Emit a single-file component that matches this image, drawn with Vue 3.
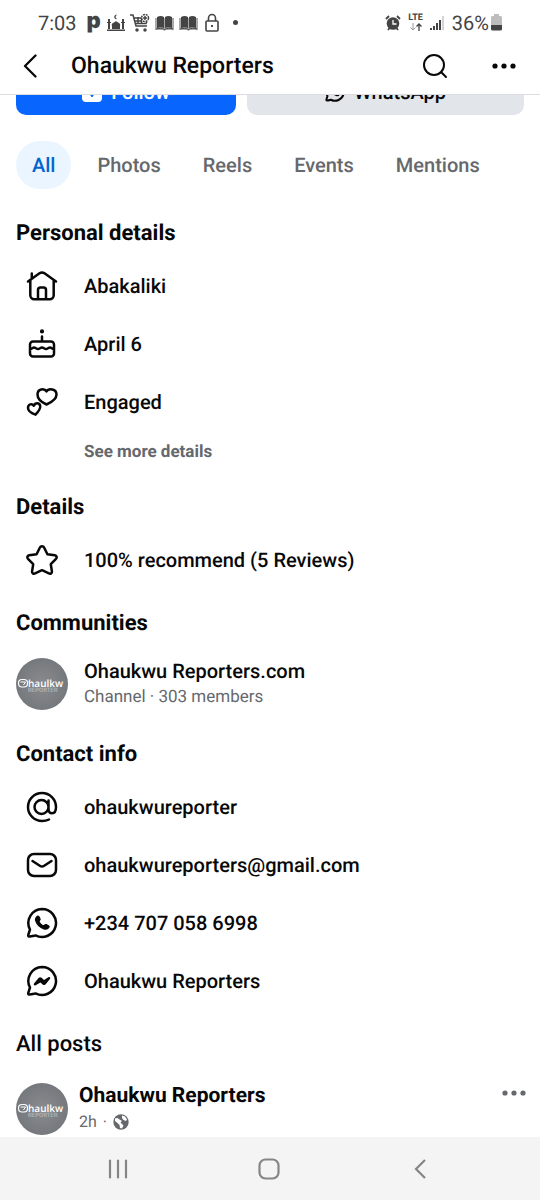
<template>
  <div class="screen">
    <div class="status-bar">
      <div class="status-left">
        <span class="clock">7:03</span>
        <span class="p-logo">p</span>
        <svg class="mosque" width="18" height="18" viewBox="0 0 18 18" fill="currentColor">
          <path d="M1 5h2v10H1zM15 5h2v10h-2zM0 8h4v1H0zM14 8h4v1h-4zM5 15v-3c-1.500-3 3-3.500 4-5 1 1.500 5.500 2 4 5v3zM0 15.500h18V17H0z" />
          <path d="M10.500 1a2.200 2.200 0 1 0 0 3.800 1.900 1.900 0 1 1 0-3.800z" />
        </svg>
        <svg width="20" height="20" viewBox="0 0 20 20" fill="none" stroke="currentColor" stroke-width="1.500">
          <path d="M0 2h3l3 11h11M4 5h7M5 8h7M5 10.500h11l1-2M8 4v7M11.500 5v6" />
          <circle cx="15" cy="5" r="3.500" stroke-dasharray="2 .8" />
          <path d="M15 3v4M13 5h4" />
          <circle cx="7" cy="17" r="1" fill="currentColor" />
          <circle cx="15" cy="17" r="1" fill="currentColor" />
        </svg>
        <svg v-for="n in 2" :key="n" class="book" width="19" height="16" viewBox="0 0 19 16">
          <path d="M0 3h19v12h-8l-1.500 1L8 15H0z" fill="#aaa" />
          <path d="M2 2c3-1.500 5-1 7 0v11c-2-1-4-1-7 0zM10 2c2-1 4-1.500 7 0v11c-3-1-5-1-7 0z" fill="currentColor" />
          <path d="M1 14c3-1 6-1 8.500.500C12 13 15 13 18 14" fill="none" stroke="currentColor" stroke-width="1" />
        </svg>
        <svg class="lock" width="14" height="20" viewBox="0 0 14 20" fill="none" stroke="currentColor" stroke-width="1.600">
          <rect x="1" y="8" width="12" height="10" rx="1" />
          <path d="M3.500 8V5a3.500 3.500 0 0 1 7 0v3" />
          <circle cx="7" cy="13" r="1" fill="currentColor" stroke="none" />
          <path d="M7 12v2" />
        </svg>
        <span class="status-dot"></span>
      </div>
      <div class="status-right">
        <svg width="16" height="16" viewBox="0 0 16 16">
          <circle cx="8" cy="8.500" r="6.300" fill="currentColor" />
          <path d="M1 4l3-3M15 4l-3-3M3 15l1.500-2M13 15l-1.500-2" stroke="currentColor" stroke-width="1.800" />
          <path d="M8 5v4h3.500" fill="none" stroke="#fff" stroke-width="1.300" />
        </svg>
        <div class="network">
          <span>LTE</span>
          <svg width="12" height="8" viewBox="0 0 12 8" fill="none">
            <path d="M3 0v7M.5 4.500L3 7l2.500-2.500" stroke="#999" />
            <path d="M9 8V1M6.500 3.500L9 1l2.500 2.500" stroke="currentColor" stroke-width="1.300" />
          </svg>
        </div>
        <svg width="15" height="16" viewBox="0 0 15 16" fill="currentColor">
          <path d="M0 13h2v2H0zM3 11h2v4H3zM6 8h2v7H6zM9 5h2v10H9z" />
          <path d="M12.500 1h1v14h-1z" fill="#aaa" />
        </svg>
        <span class="battery-text">36%</span>
        <svg class="battery" width="11" height="17" viewBox="0 0 11 17">
          <path d="M3 0h5v2h1.500A1.500 1.500 0 0 1 11 3.500V11H0V3.500A1.500 1.500 0 0 1 1.500 2H3z" fill="#bdbdbd" />
          <path d="M0 11h11v4a1.500 1.500 0 0 1-1.500 1.500h-8A1.500 1.500 0 0 1 0 15z" fill="currentColor" />
        </svg>
      </div>
    </div>

    <header class="header">
      <button class="icon-btn" aria-label="Back">
        <svg width="14" height="24" viewBox="0 0 14 24" fill="none" stroke="currentColor" stroke-width="2.300" stroke-linecap="round" stroke-linejoin="round">
          <path d="M12.500 1.500L2 12l10.500 10.500" />
        </svg>
      </button>
      <h1>Ohaukwu Reporters</h1>
      <button class="icon-btn" aria-label="Search">
        <svg width="26" height="26" viewBox="0 0 26 26" fill="none" stroke="currentColor" stroke-width="2" stroke-linecap="round">
          <circle cx="12" cy="12" r="10" />
          <path d="M19.300 19.300L24 24" />
        </svg>
      </button>
      <button class="icon-btn more" aria-label="More options">
        <svg width="24" height="6" viewBox="0 0 24 6" fill="currentColor">
          <circle cx="3" cy="3" r="2.600" />
          <circle cx="12" cy="3" r="2.600" />
          <circle cx="21" cy="3" r="2.600" />
        </svg>
      </button>
    </header>

    <main class="content">
      <div class="actions">
        <button class="action follow">
          <svg width="20" height="20" viewBox="0 0 20 20">
            <rect width="20" height="20" rx="4" fill="#fff" />
            <path d="M10 5v8M8 12h4l-2 3z" fill="#0866ff" stroke="#0866ff" stroke-linejoin="round" />
          </svg>
          Follow
        </button>
        <button class="action whatsapp">
          <svg width="20" height="20" viewBox="0 0 32 32">
            <path :d="bubble" fill="none" stroke="currentColor" stroke-width="3.200" stroke-linejoin="round" />
            <path :d="phone" fill="currentColor" />
          </svg>
          WhatsApp
        </button>
      </div>

      <nav class="tabs">
        <button
          v-for="tab in tabs"
          :key="tab"
          :class="['tab', { active: tab === currentTab }]"
          @click="currentTab = tab"
        >
          {{ tab }}
        </button>
      </nav>

      <section v-for="section in sections" :key="section.title" class="section">
        <h2>{{ section.title }}</h2>

        <component
          :is="item.href ? 'a' : 'div'"
          v-for="item in section.items"
          :key="item.text"
          :href="item.href"
          class="row"
        >
          <span class="row-icon">
            <svg width="32" height="32" viewBox="0 0 32 32" fill="none" stroke="currentColor" stroke-width="2.500" stroke-linecap="round" stroke-linejoin="round">
              <path :d="icons[item.icon].line" />
              <path v-if="icons[item.icon].solid" :d="icons[item.icon].solid" fill="currentColor" stroke="none" />
            </svg>
          </span>
          <span>{{ item.text }}</span>
        </component>

        <button v-if="section.more" class="see-more">{{ section.more }}</button>

        <a v-if="section.community" href="#" class="community">
          <svg class="avatar" viewBox="0 0 52 52"><use href="#page-avatar" /></svg>
          <span class="community-text">
            <span class="name">{{ section.community.name }}</span>
            <span class="meta">{{ section.community.meta }}</span>
          </span>
        </a>
      </section>

      <section class="section">
        <h2 class="posts-title">All posts</h2>
        <article class="post">
          <svg class="avatar" viewBox="0 0 52 52">
            <defs>
              <radialGradient id="avatar-bg">
                <stop offset="0" stop-color="#898b8f" />
                <stop offset="1" stop-color="#75787c" />
              </radialGradient>
              <g id="page-avatar">
                <circle cx="26" cy="26" r="26" fill="url(#avatar-bg)" />
                <rect x="2.500" y="21.500" width="9" height="7.500" rx="3.500" fill="none" stroke="#fff" stroke-width="1.200" />
                <path d="M4.500 24h5l-2 3" fill="none" stroke="#fff" />
                <text x="12" y="29" class="logo-text">haulkw</text>
                <text x="12" y="34" class="logo-sub">REPORTER</text>
              </g>
            </defs>
            <use href="#page-avatar" />
          </svg>
          <div class="post-text">
            <h3>Ohaukwu Reporters</h3>
            <p class="post-meta">
              <span>2h</span>
              <span>·</span>
              <svg width="16" height="16" viewBox="0 0 16 16">
                <circle cx="8" cy="8" r="7.700" fill="#65686c" />
                <path d="M2 4.500l2.500-.5 2 1.500 2.500 1.500-1.500 1.500 1.500 1.500 1.500 1.500-1.500 3-2-.5-.5-3-2-2-2.500-2zM9 1.500l3 1 2 3-1 1.500-2.500-1-1.500-2z" fill="#fff" />
              </svg>
            </p>
          </div>
          <button class="icon-btn post-more" aria-label="Post options">
            <svg width="24" height="6" viewBox="0 0 24 6" fill="currentColor">
              <circle cx="3" cy="3" r="2.600" />
              <circle cx="12" cy="3" r="2.600" />
              <circle cx="21" cy="3" r="2.600" />
            </svg>
          </button>
        </article>
      </section>
    </main>

    <nav class="system-nav">
      <button aria-label="Recent apps">
        <svg width="20" height="20" viewBox="0 0 20 20" stroke="currentColor" stroke-width="2.200" stroke-linecap="round">
          <path d="M2 1.500v17M10 1.500v17M18 1.500v17" />
        </svg>
      </button>
      <button aria-label="Home">
        <svg width="22" height="22" viewBox="0 0 22 22" fill="none" stroke="currentColor" stroke-width="2.200">
          <rect x="1.500" y="1.500" width="19" height="19" rx="6" />
        </svg>
      </button>
      <button aria-label="Back">
        <svg width="12" height="20" viewBox="0 0 12 20" fill="none" stroke="currentColor" stroke-width="2.200">
          <path d="M11 1l-9 9 9 9" />
        </svg>
      </button>
    </nav>
  </div>
</template>

<script setup>
import { ref } from "vue";

const tabs = ["All", "Photos", "Reels", "Events", "Mentions"];
const currentTab = ref("All");

// Chat bubble shared by the WhatsApp and Messenger icons
const bubble =
  "M16 2a14 14 0 1 1-6.500 26.400C7 29 4 30 2.600 29.400c-.8-.4-.3-1.600 0-2.600L4 22.500A14 14 0 0 1 16 2z";
const phone =
  "M10.500 9.200c1-1 2.300-.7 3 .4l1 1.900c.5 1 .1 1.600-.6 2.400-.3.400-.2.800.1 1.300.7 1.100 1.600 2 2.800 2.700.5.300.9.300 1.300-.1.800-.9 1.500-1.100 2.400-.7l2.200 1.100c1.100.6 1.300 1.500.6 2.600-1.200 1.900-3.300 2.300-5.500 1.600-4.400-1.400-7.600-4.500-8.800-8.800-.4-1.600.2-3.200 1.500-4.400z";

const icons = {
  home: {
    line: "M2 11.500L13.500 3.300a4.500 4.500 0 0 1 5 0L30 11.500M4.300 10.500v14.800a4 4 0 0 0 4 4h15.400a4 4 0 0 0 4-4V10.500M5.800 8V3.500M12 29v-9a2.500 2.500 0 0 1 2.500-2.500h3A2.500 2.500 0 0 1 20 20v9",
  },
  cake: {
    line: "M16 8.500V13M7 13.500h18a3 3 0 0 1 3 3v9a3 3 0 0 1-3 3H7a3 3 0 0 1-3-3v-9a3 3 0 0 1 3-3zM4 21c2 0 2.500-1.500 4-1.500s2.500 1.500 4 1.500 2.500-1.500 4-1.500 2.500 1.500 4 1.500 2.500-1.500 4-1.500 2 1.500 4 1.500",
    solid: "M16 1.300a2.100 2.100 0 1 1 0 4.200 2.100 2.100 0 0 1 0-4.200z",
  },
  hearts: {
    line: "M20.500 5.500C18.500 2 11.500 2.500 11.500 8.500c0 4.500 4.500 8 9 10 4.500-2 10-5.500 10-10 0-6-8-6.500-10-3zM7.800 19.800C6 17 2 18 2 22c0 3.500 3.500 5.200 7.500 6.700 2.500-2.700 5.200-5.700 4.700-8.700-.7-3.500-5-3.500-6.400-.2z",
  },
  star: {
    line: "M13.900 3.500a2.300 2.300 0 0 1 4.200 0l3.300 6.700 7.400 1.100c1.900.3 2.400 2.100 1.200 3.500l-5.200 5.400 1.100 7c.3 2-1.400 3-3 2.200L16 26.200l-6.900 3.200c-1.600.8-3.300-.2-3-2.200l1.100-7L2 14.800c-1.200-1.400-.7-3.200 1.200-3.500l7.400-1.100z",
  },
  at: {
    line: "M22.500 9.500v8.300c0 3 1.300 4.500 3.500 4.500 2.700 0 4-2.700 4-6.300a14 14 0 1 0-14 14c2.500 0 5-.5 7-1.500M22.500 16a7 7 0 1 1-14 0 7 7 0 0 1 14 0z",
  },
  mail: {
    line: "M8 5h16a6 6 0 0 1 6 6v10a6 6 0 0 1-6 6H8a6 6 0 0 1-6-6V11a6 6 0 0 1 6-6zM6.500 12l7.700 5a3.300 3.300 0 0 0 3.600 0l7.700-5",
  },
  whatsapp: { line: bubble, solid: phone },
  messenger: {
    line: bubble,
    solid:
      "M8 18.500l4.600-5.500c.8-1 2.100-1 3-.2l2.400 2.100 4.400-2.700c1.400-.8 2.400.4 1.500 1.700l-4 5.200c-.8 1.100-2.200 1.200-3.200.3l-2.300-1.900-4.700 2.800c-1.400.8-2.500-.7-1.700-1.800z",
  },
};

const sections = [
  {
    title: "Personal details",
    items: [
      { icon: "home", text: "Abakaliki" },
      { icon: "cake", text: "April 6" },
      { icon: "hearts", text: "Engaged" },
    ],
    more: "See more details",
  },
  {
    title: "Details",
    items: [{ icon: "star", text: "100% recommend (5 Reviews)" }],
  },
  {
    title: "Communities",
    items: [],
    community: { name: "Ohaukwu Reporters.com", meta: "Channel · 303 members" },
  },
  {
    title: "Contact info",
    items: [
      { icon: "at", text: "ohaukwureporter", href: "#" },
      { icon: "mail", text: "ohaukwureporters@gmail.com", href: "mailto:ohaukwureporters@gmail.com" },
      { icon: "whatsapp", text: "+234 707 058 6998", href: "tel:+2347070586998" },
      { icon: "messenger", text: "Ohaukwu Reporters", href: "#" },
    ],
  },
];
</script>

<style>
body {
  margin: 0;
  background: #fff;
}
</style>

<style scoped>
.screen {
  min-height: 100vh;
  display: flex;
  flex-direction: column;
  background: #fff;
  color: #080809;
  font-family: Roboto, "Liberation Sans", sans-serif;
  font-size: 20px;
  text-rendering: geometricPrecision;
}

svg {
  display: block;
  flex: none;
}

button {
  font: inherit;
  color: inherit;
  text-rendering: inherit;
  background: none;
  border: none;
  padding: 0;
  cursor: pointer;
}

a {
  color: inherit;
  text-decoration: none;
}

h1,
h2,
h3,
p {
  margin: 0;
}

/* Status bar */
.status-bar {
  display: flex;
  align-items: center;
  justify-content: space-between;
  height: 45px;
  padding: 0 38px;
  color: #444;
}

.status-left,
.status-right {
  display: flex;
  align-items: center;
}

.status-left {
  gap: 5px;
}

.status-right {
  gap: 7px;
}

.clock,
.battery-text {
  font-size: 20px;
  line-height: 24px;
}

.p-logo {
  width: 16px;
  margin-left: 4px;
  padding-bottom: 4px;
  font-family: Inter, sans-serif;
  font-size: 22px;
  line-height: 20px;
  font-weight: 900;
  text-align: center;
}

.lock {
  margin-left: 2px;
}

.status-dot {
  width: 5px;
  height: 5px;
  margin-left: 9px;
  border-radius: 50%;
  background: currentColor;
}

.network {
  display: flex;
  flex-direction: column;
  align-items: center;
  font-size: 9px;
  line-height: 9px;
  font-weight: 700;
}

.battery {
  margin-left: -5px;
}

/* Header */
.header {
  display: flex;
  align-items: center;
  height: 42px;
  padding: 0 24px 7px 23px;
  border-bottom: 1px solid #dcdde0;
}

.header h1 {
  flex: 1;
  margin-left: 34px;
  font-size: 23px;
  line-height: 28px;
  font-weight: 500;
}

.icon-btn {
  display: flex;
  align-items: center;
  justify-content: center;
}

.more {
  margin-left: 44px;
}

.content {
  flex: 1;
}

/* Follow and WhatsApp are scrolled partly under the header */
.actions {
  display: flex;
  align-items: flex-end;
  gap: 11px;
  height: 20px;
  padding: 0 16px;
  overflow: hidden;
}

.action {
  display: flex;
  align-items: center;
  justify-content: center;
  gap: 9px;
  height: 47px;
  border-radius: 10px;
  font-weight: 500;
}

.follow {
  flex: 220 1 0;
  background: #0866ff;
  color: #fff;
}

.whatsapp {
  flex: 277 1 0;
  background: #e2e5e9;
}

/* Tabs */
.tabs {
  display: flex;
  gap: 10px;
  padding: 26px 16px 10px;
}

.tab {
  height: 48px;
  padding: 0 16px;
  border-radius: 24px;
  color: #65686c;
  font-weight: 500;
}

.tab.active {
  background: #ebf5ff;
  color: #0064d1;
}

/* Sections */
.section {
  padding-top: 12px;
}

.section h2 {
  padding: 0 16px;
  font-size: 22px;
  line-height: 46px;
  font-weight: 700;
}

.section .posts-title {
  font-weight: 500;
}

.row {
  display: flex;
  align-items: center;
  gap: 16px;
  height: 58px;
  padding: 0 16px;
  font-weight: 500;
}

.row-icon {
  display: flex;
  justify-content: center;
  width: 52px;
}

.see-more {
  display: block;
  height: 42px;
  margin-left: 84px;
  color: #65686c;
  font-size: 17px;
  font-weight: 700;
}

.community {
  display: flex;
  align-items: center;
  gap: 16px;
  padding: 11px 16px 10px;
}

.avatar {
  width: 52px;
  height: 52px;
}

.logo-text {
  fill: #fff;
  font-family: "Open Sans", sans-serif;
  font-size: 10px;
  font-weight: 600;
}

.logo-sub {
  fill: #b4b6ba;
  font-size: 6px;
  font-weight: 500;
}

.community-text {
  display: flex;
  flex-direction: column;
  line-height: 26px;
}

.name {
  font-weight: 500;
}

.meta {
  color: #65686c;
  font-size: 17px;
}

/* Posts */
.post {
  display: flex;
  align-items: flex-start;
  gap: 11px;
  padding: 15px 14px 2px 16px;
}

.post-text {
  flex: 1;
}

.post h3 {
  font-size: 21px;
  line-height: 26px;
  font-weight: 700;
}

.post-meta {
  display: flex;
  align-items: center;
  gap: 6px;
  color: #65686c;
  font-size: 16px;
  line-height: 26px;
}

.post-more {
  height: 20px;
  color: #65686c;
}

/* Android navigation */
.system-nav {
  display: flex;
  height: 63px;
  padding: 0 44px 0 42px;
  background: #f4f4f4;
  color: #858585;
}

.system-nav button {
  flex: 1;
  display: flex;
  align-items: center;
  justify-content: center;
}
</style>
